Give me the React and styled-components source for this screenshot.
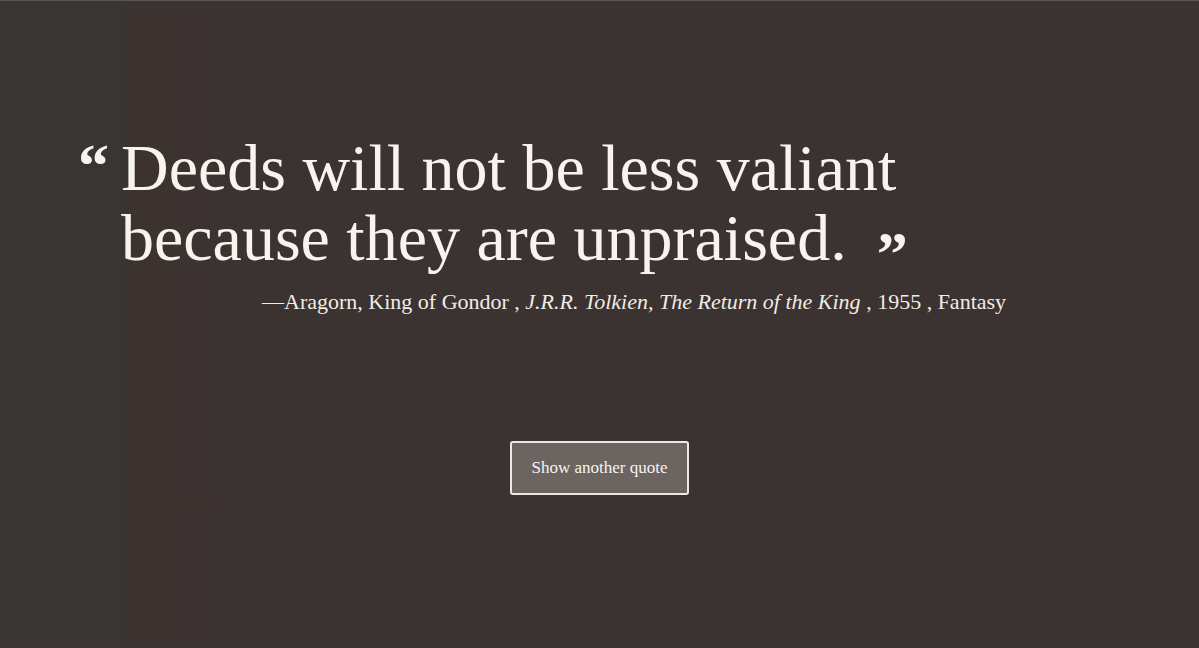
import React from "react";
import styled, { createGlobalStyle } from "styled-components";

const Global = createGlobalStyle`
  html, body { margin: 0; padding: 0; background: #3b3331; }
  #root { min-height: 648px; }
`;

const Page = styled.main`
  min-height: 647px;
  border-top: 1px solid #5a5756;
  background: linear-gradient(to right, #383532 0, #383532 118px, #3c3331 128px, #3b3331 100%);
  font-family: "Liberation Serif", "DejaVu Serif", serif;
  color: #f7f3ee;
  display: flex;
  flex-direction: column;
  padding-top: 132px;
  box-sizing: border-box;
`;

const Quote = styled.blockquote`
  margin: 0;
  padding-left: 78px;
  display: flex;
  align-items: flex-start;
`;

const OpenMark = styled.span`
  flex: 0 0 43px;
  margin-top: 1px;
  font-weight: 700;
  font-size: 62px;
  line-height: 1;
`;

const CloseMark = styled.span`
  display: inline-block;
  margin-left: 30px;
  font-weight: 700;
  font-size: 62px;
  line-height: 0;
  vertical-align: -14px;
`;

const Text = styled.p`
  margin: 0;
  font-size: 66px;
  line-height: 70px;
  letter-spacing: 0;
  width: 820px;
`;

const Attribution = styled.p`
  margin: 17px 0 0 262px;
  font-size: 22px;
  line-height: 24px;
  color: #f1ece6;
`;

const Em = styled.em`
  font-style: italic;
`;

const Button = styled.button`
  align-self: center;
  margin-top: 127px;
  width: 179px;
  height: 54px;
  background: #6b6461;
  border: 2px solid #ece8e4;
  border-radius: 3px;
  color: #f7f3ee;
  font-family: "Liberation Serif", "DejaVu Serif", serif;
  font-size: 17px;
  cursor: pointer;
`;

export default function App() {
  return (
    <>
      <Global />
      <Page>
        <Quote>
          <OpenMark>“</OpenMark>
          <Text>
            Deeds will not be less valiant because they are unpraised.
            <CloseMark>”</CloseMark>
          </Text>
        </Quote>
        <Attribution>
          —Aragorn, King of Gondor , <Em>J.R.R. Tolkien, The Return of the King</Em> , 1955 , Fantasy
        </Attribution>
        <Button>Show another quote</Button>
      </Page>
    </>
  );
}
